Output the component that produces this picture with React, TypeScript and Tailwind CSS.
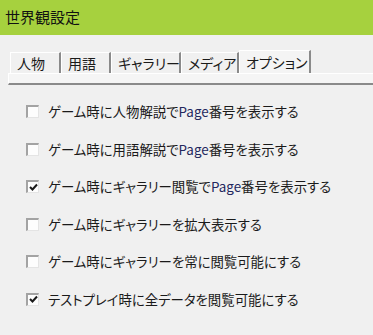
import React from 'react';

const tabs = [
  { label: '人物', width: 51 },
  { label: '用語', width: 50 },
  { label: 'ギャラリー', width: 70 },
  { label: 'メディア', width: 58 },
  { label: 'オプション', width: 72, active: true },
];

const options: { before: string; page?: boolean; after?: string; checked: boolean }[] = [
  { before: 'ゲーム時に人物解説で', page: true, after: '番号を表示する', checked: false },
  { before: 'ゲーム時に用語解説で', page: true, after: '番号を表示する', checked: false },
  { before: 'ゲーム時にギャラリー閲覧で', page: true, after: '番号を表示する', checked: true },
  { before: 'ゲーム時にギャラリーを拡大表示する', checked: false },
  { before: 'ゲーム時にギャラリーを常に閲覧可能にする', checked: false },
  { before: 'テストプレイ時に全データを閲覧可能にする', checked: true },
];

function CheckBox({ checked }: { checked: boolean }) {
  return (
    <div className="w-[13px] h-[13px] shrink-0 bg-[#fdfdfd] border-t-2 border-l-2 border-t-[#a3a3a3] border-l-[#a3a3a3] border-r border-b border-r-[#e4e4e4] border-b-[#e4e4e4] flex items-center justify-center">
      {checked && (
        <svg width="9" height="9" viewBox="0 0 9 9" className="shrink-0">
          <path d="M1 4 L3.5 6.5 L8 1.5" fill="none" stroke="#1a1a1a" strokeWidth="2" />
        </svg>
      )}
    </div>
  );
}

export default function App() {
  return (
    <div
      className="w-[373px] h-[335px] bg-[#f0f0f0] overflow-hidden text-[#1a1a1a] [font-feature-settings:'palt']"
      style={{ fontFamily: '"Noto Sans CJK JP", "Noto Sans", sans-serif' }}
    >
      {/* Title bar */}
      <div className="h-[35px] bg-[#a6d13e] flex items-center pl-[5px] text-[15px] text-[#111]">
        世界観設定
      </div>

      {/* Tabs */}
      <div className="pl-[8px] mt-[15px]">
        <div className="flex items-end h-[23px] pl-[2px]">
          {tabs.map((t) => (
            <div
              key={t.label}
              className={
                t.active
                  ? 'h-[23px] shrink-0 whitespace-nowrap bg-[#f4f4f4] border-l border-t border-l-white border-t-white border-r-2 border-r-[#8a8a8a] flex items-center pl-[6px] text-[14px]'
                  : 'h-[21px] shrink-0 whitespace-nowrap bg-[#f0f0f0] border-l border-t border-l-white border-t-white border-r-2 border-r-[#8a8a8a] flex items-center pl-[6px] text-[14px]'
              }
              style={{ width: t.width }}
            >
              {t.label}
            </div>
          ))}
          <div className="flex-1" />
        </div>
        <div className="h-[12px] bg-[#f5f5f5] border-t border-l border-t-white border-l-white border-b-2 border-b-[#8a8a8a]" />
      </div>

      {/* Options */}
      <div className="pt-[8px] pl-[26px] flex flex-col">
        {options.map((o, i) => (
          <div key={i} className="h-[37.5px] flex items-center gap-[9px] text-[13.4px] leading-none">
            <CheckBox checked={o.checked} />
            <span className="whitespace-nowrap">
              {o.before}
              {o.page && <span className="text-[#24285e]">Page</span>}
              {o.after}
            </span>
          </div>
        ))}
      </div>
    </div>
  );
}
